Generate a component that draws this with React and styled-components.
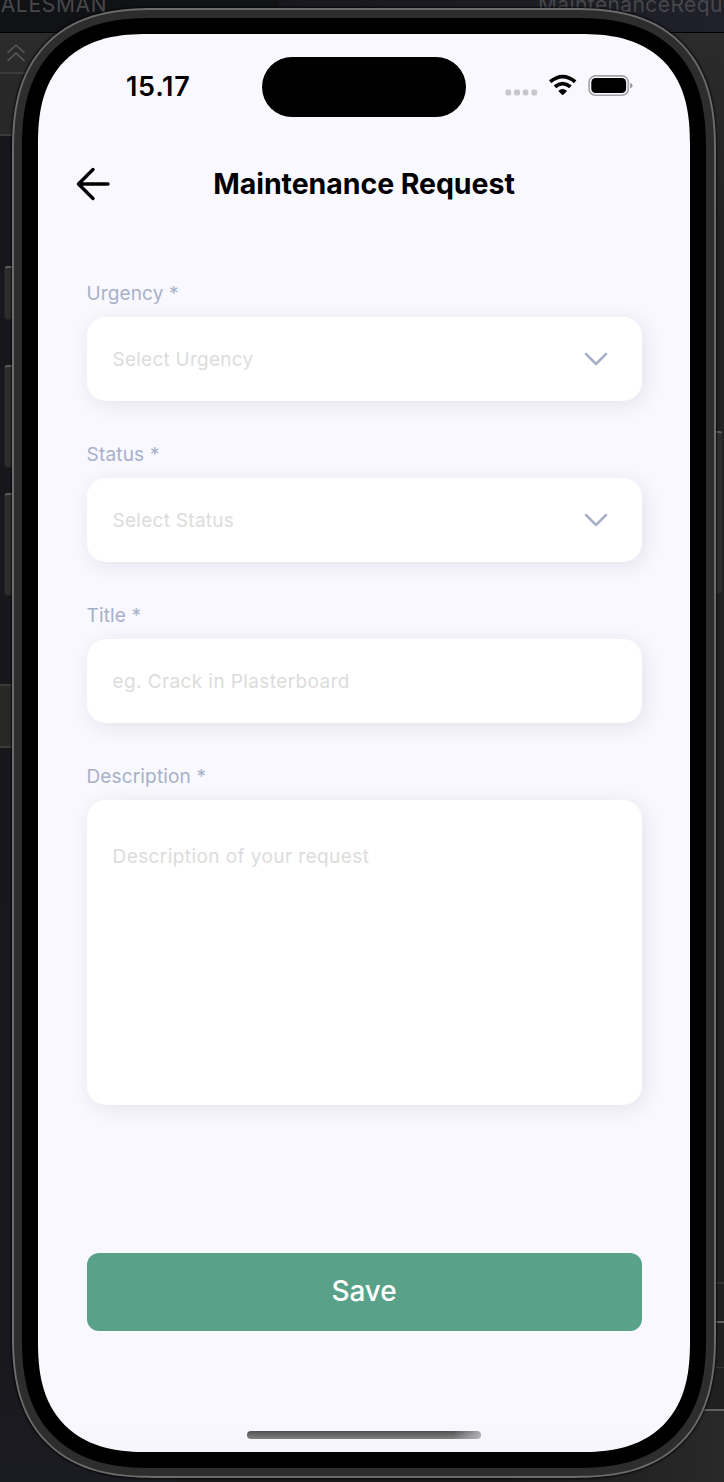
import React from 'react';
import styled, { createGlobalStyle } from 'styled-components';

const Global = createGlobalStyle`
  * { box-sizing: border-box; }
  body { margin: 0; background: #18171c; font-family: Inter, "Liberation Sans", sans-serif; }
`;

const Desktop = styled.div`
  position: relative;
  width: 724px;
  height: 1482px;
  overflow: hidden;
  display: flex;
  flex-direction: column;
  background: #18171c;
`;
const TabBar = styled.div`
  display: flex;
  height: 33px;
  flex: none;
  border-bottom: 1px solid #000;
  background: linear-gradient(90deg, #111216 0 278px, #17171d 280px, #20202a);
`;
const Tab = styled.div`
  width: ${p => p.$width}px;
  height: 32px;
  overflow: hidden;
  padding-left: ${p => p.$pad || 0}px;
  text-indent: ${p => p.$shift || 0}px;
  white-space: nowrap;
  font-size: 21px;
  line-height: 24px;
  margin-top: -7px;
  letter-spacing: ${p => p.$spacing}px;
  color: #47474b;
`;
const Columns = styled.div`
  flex: 1;
  display: flex;
  justify-content: space-between;
`;
const SidePane = styled.div`
  display: flex;
  flex-direction: column;
  width: ${p => p.$width}px;
  background: ${p => p.$bg};
`;
const Strip = styled.div`
  height: ${p => p.$h}px;
  flex: none;
  background: ${p => p.$bg || 'transparent'};
  border-bottom: ${p => (p.$line ? `${p.$thick || 2}px solid ${p.$line}` : '0')};
  padding: ${p => p.$pad || 0};
  svg { display: block; }
`;
const SideButton = styled.div`
  position: absolute;
  left: ${p => p.$x}px;
  top: ${p => p.$y}px;
  width: 12px;
  height: ${p => p.$h}px;
  border-radius: 4px;
  background: #2d2d2d;
  border: 1px solid #222;
  border-top: 2px solid #5c5c5c;
`;

const corner = r => `
  border-radius: ${r}px;
  @supports (corner-shape: superellipse(1.3)) {
    border-radius: ${Math.round(r * 1.2)}px;
    corner-shape: superellipse(1.31);
  }
`;
const Phone = styled.div`
  position: absolute;
  left: 12px;
  top: 8px;
  width: 704px;
  height: 1470px;
  padding: 2px;
  background: #6c6c6c;
  box-shadow: 0 0 2px 1px rgba(0, 0, 0, .65);
  ${corner(118)}
`;
const Casing = styled.div`
  height: 100%;
  padding: 8px;
  background: #2d2d2d;
  ${corner(116)}
`;
const Bezel = styled.div`
  height: 100%;
  padding: 16px;
  background: #000;
  ${corner(108)}
`;
const Screen = styled.div`
  height: 100%;
  overflow: hidden;
  display: flex;
  flex-direction: column;
  background: linear-gradient(#f9f8ff 1385px, #f5f5fb 1418px);
  ${corner(92)}
`;
const StatusBar = styled.div`
  display: flex;
  align-items: center;
  flex: none;
  height: 60px;
  margin-top: 22.5px;
`;
const Clock = styled.div`
  width: 224px;
  padding-left: 88px;
  font-size: 27px;
  line-height: 32px;
  font-weight: 600;
  letter-spacing: .7px;
`;
const Island = styled.div`
  width: 204px;
  height: 60px;
  border-radius: 30px;
  background: #000;
`;
const Indicators = styled.svg`
  width: 132px;
  height: 30px;
  margin: 0 0 1px 38px;
`;
const Header = styled.header`
  display: grid;
  grid-template-columns: 80px 1fr 80px;
  align-items: center;
  height: 40px;
  margin-top: 47.5px;
`;
const BackIcon = styled.svg`
  width: 36px;
  height: 36px;
  margin-left: 37px;
`;
const Title = styled.h1`
  margin: 0;
  text-align: center;
  white-space: nowrap;
  font-size: 28.5px;
  line-height: 40px;
  font-weight: 700;
  letter-spacing: -.06px;
`;
const Form = styled.form`
  display: flex;
  flex-direction: column;
  margin: 74px 48.5px 0;
`;
const Field = styled.div`
  display: flex;
  flex-direction: column;
  margin-bottom: 38px;
`;
const Label = styled.label`
  height: 39px;
  padding-top: 3px;
  font-size: 19px;
  line-height: 26px;
  letter-spacing: ${p => p.$spacing}px;
  color: #a6b1c8;
`;
const Control = styled.div`
  display: flex;
  justify-content: space-between;
  align-items: ${p => (p.$tall ? 'flex-start' : 'center')};
  height: ${p => (p.$tall ? 305 : 84)}px;
  padding: ${p => (p.$tall ? '43px' : '0')} 33px 0 26px;
  margin-bottom: ${p => (p.$tall ? 0 : .1)}px;
  border-radius: 19px;
  background: #fff;
  box-shadow: 3px 4px 20px rgba(30, 28, 45, .095);
`;
const Placeholder = styled.span`
  padding-top: ${p => (p.$tall ? 1 : 2)}px;
  font-size: 19px;
  line-height: 26px;
  letter-spacing: ${p => p.$spacing}px;
  color: #dcdcdc;
`;
const Chevron = styled.svg`
  width: 25px;
  height: 16px;
`;
const SaveButton = styled.button`
  height: 78px;
  margin-top: 110px;
  padding: 0 0 2px;
  border: 0;
  border-radius: 12px;
  background: #59a289;
  color: #fff;
  font: 500 28px/40px Inter, "Liberation Sans", sans-serif;
  letter-spacing: -.1px;
`;
const HomeBar = styled.div`
  width: 234px;
  height: 8px;
  flex: none;
  margin: auto auto 13px;
  border-radius: 4px;
  background: linear-gradient(90deg, transparent 88%, rgba(200, 200, 206, .75)), linear-gradient(#505050, #828284);
`;

function SelectArrow() {
  return (
    <Chevron viewBox="0 0 25 16" fill="none" stroke="#a6b1c8" strokeWidth="2.5" strokeLinecap="round" strokeLinejoin="round">
      <path d="M2 3 12 13 22 3" />
    </Chevron>
  );
}

const fields = [
  { label: 'Urgency *', labelGap: 0.12, hint: 'Select Urgency', hintGap: 0.24, select: true },
  { label: 'Status *', labelGap: 0.2, hint: 'Select Status', hintGap: 0.28, select: true },
  { label: 'Title *', labelGap: 0.15, hint: 'eg. Crack in Plasterboard', hintGap: 0.4 },
  { label: 'Description *', labelGap: 0.15, hint: 'Description of your request', hintGap: 0.42, tall: true },
];

export default function App() {
  return (
    <>
      <Global />
      <Desktop>
        <TabBar>
          <Tab $width={279} $shift={-13.5} $spacing={0.7}>SALESMAN</Tab>
          <Tab $width={445} $pad={259} $spacing={0.4}>MaintenanceRequest</Tab>
        </TabBar>
        <Columns>
          <SidePane $width={176} $bg="linear-gradient(#17161b, #18171c 90%, #1b1c22)">
            <Strip $h={41} $bg="#2b2b2b" $line="#3b3b3b" $pad="9px 0 0 6px">
              <svg width="20" height="22" fill="none" stroke="#5b5b5b" strokeWidth="1.5">
                <path d="m1.5 11 8.5-8 8.5 8M1.5 19l8.5-8 8.5 8" />
              </svg>
            </Strip>
            <Strip $h={62} $bg="#282828" $line="#3b3b3b" />
            <Strip $h={548} />
            <Strip $h={2} $bg="#383838" />
            <Strip $h={62} $bg="#282827" $line="#3b3b3b" />
          </SidePane>
          <SidePane $width={548} $bg="linear-gradient(#2b2b2b, #222 180px, #202020)">
            <Strip $h={1251} $line="#333" />
            <Strip $h={39} $line="#606060" />
            <Strip $h={45} $line="#353535" $thick={1} />
            <Strip $h={43} $line="#606060" />
            <Strip $h={71} $bg="linear-gradient(90deg, #191919 60%, #292929)" />
          </SidePane>
        </Columns>
        <SideButton $x={4} $y={266} $h={54} />
        <SideButton $x={4} $y={365} $h={103} />
        <SideButton $x={4} $y={493} $h={103} />
        <SideButton $x={711} $y={431} $h={163} />
        <Phone>
          <Casing>
            <Bezel>
              <Screen>
                <StatusBar>
                  <Clock>15.17</Clock>
                  <Island />
                  <Indicators viewBox="0 0 132 30">
                    <g fill="#c7c7cc">
                      <rect x="1.5" y="18.5" width="5.6" height="6" rx="1.8" />
                      <rect x="10" y="18.5" width="6" height="6" rx="1.8" />
                      <rect x="18.8" y="18.5" width="5.6" height="6" rx="1.8" />
                      <rect x="27.4" y="18.5" width="5.8" height="6" rx="1.8" />
                    </g>
                    <g fill="none" stroke="#000" strokeWidth="3.7">
                      <path d="M46.2 10.8Q58.7 .6 71.2 10.8" />
                      <path d="M50.9 15.7Q58.7 9.4 66.5 15.7" />
                    </g>
                    <path d="M54.3 19.9Q58.7 16.3 63.1 19.9L59.3 23.8Q58.7 24.4 58.1 23.8Z" />
                    <rect x="85.1" y="4.9" width="39.2" height="19.4" rx="6.4" fill="none" stroke="#a3a3a8" strokeWidth="1.6" />
                    <rect x="87.3" y="7.1" width="34.8" height="15" rx="4.3" />
                    <path d="M126.2 11.7Q128.6 12.5 128.6 14.6T126.2 17.5Z" fill="#98989d" />
                  </Indicators>
                </StatusBar>
                <Header>
                  <BackIcon viewBox="0 0 36 36" fill="none" stroke="#000" strokeWidth="3.4" strokeLinecap="round" strokeLinejoin="round">
                    <path d="M33 18H3.8M18 3.5 3.5 18 18 32.5" />
                  </BackIcon>
                  <Title>Maintenance Request</Title>
                </Header>
                <Form>
                  {fields.map(f => (
                    <Field key={f.label}>
                      <Label $spacing={f.labelGap}>{f.label}</Label>
                      <Control $tall={f.tall}>
                        <Placeholder $tall={f.tall} $spacing={f.hintGap}>{f.hint}</Placeholder>
                        {f.select && <SelectArrow />}
                      </Control>
                    </Field>
                  ))}
                  <SaveButton type="button">Save</SaveButton>
                </Form>
                <HomeBar />
              </Screen>
            </Bezel>
          </Casing>
        </Phone>
      </Desktop>
    </>
  );
}
